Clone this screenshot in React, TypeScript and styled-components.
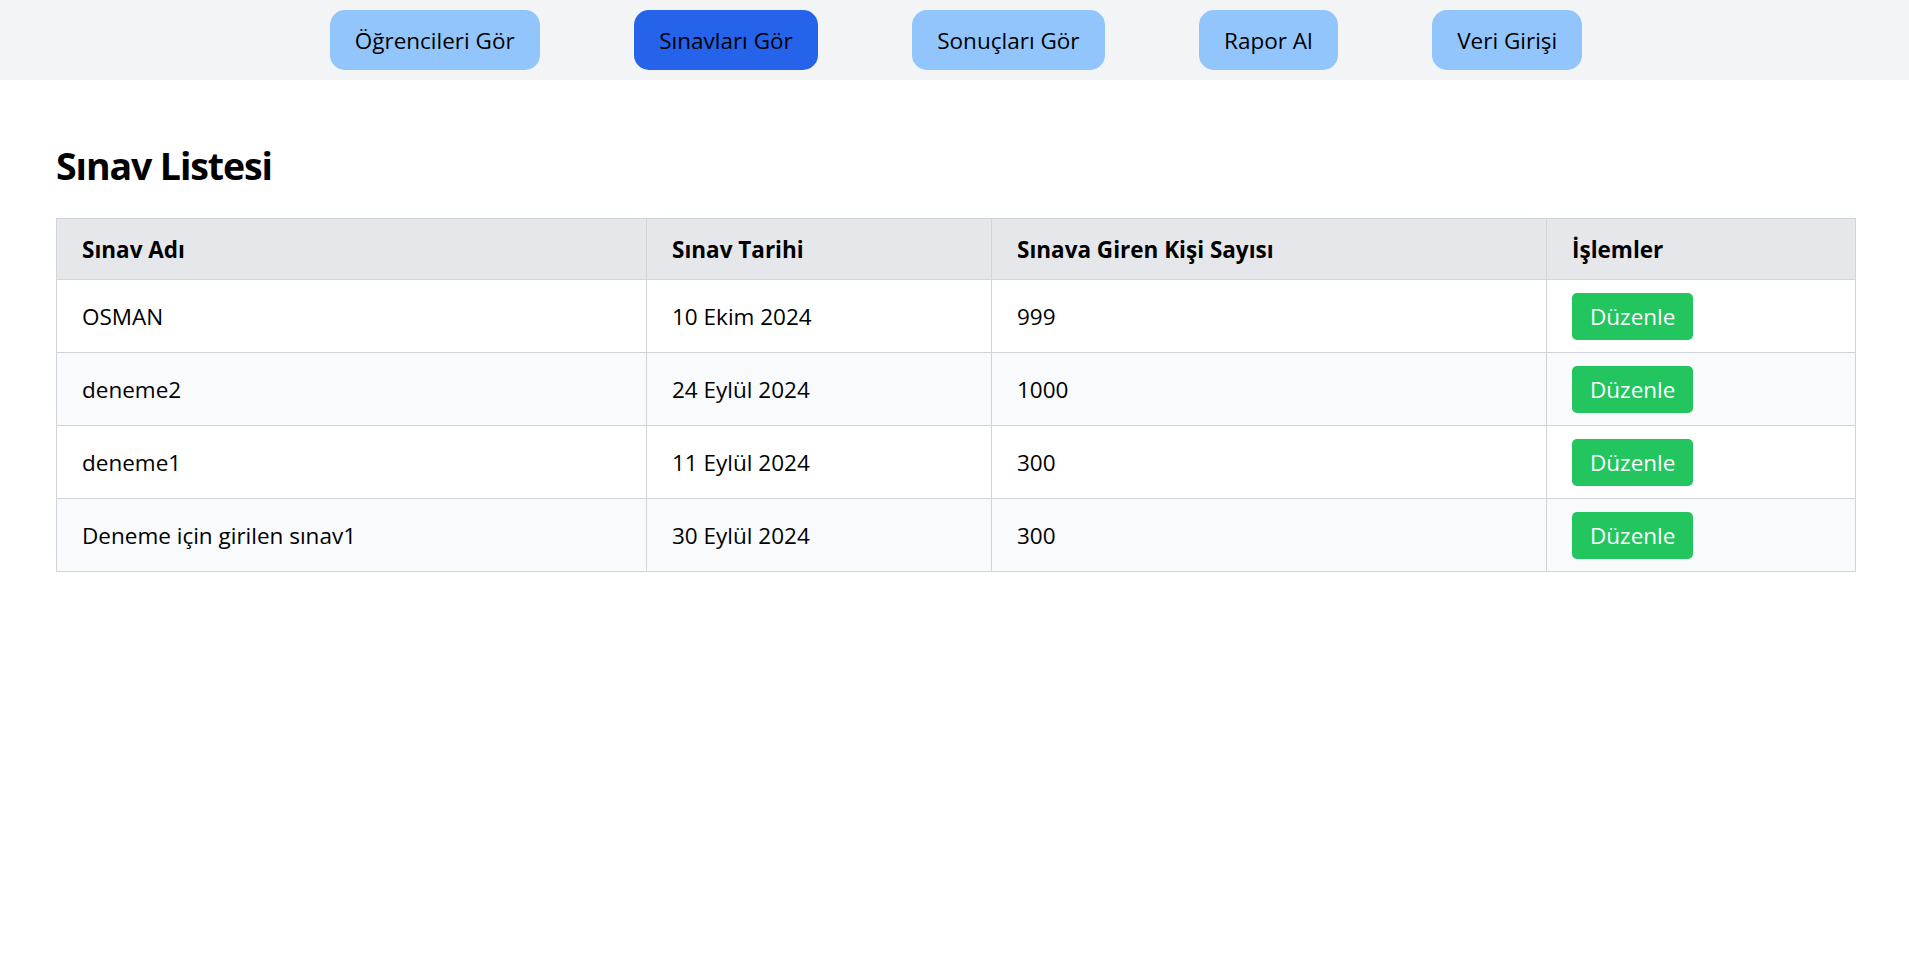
import React from "react";
import styled, { createGlobalStyle } from "styled-components";

const GlobalStyle = createGlobalStyle`
  html, body {
    margin: 0;
    padding: 0;
    background: #ffffff;
  }
  body {
    font-family: "Segoe UI", "Open Sans", "Noto Sans", sans-serif;
    color: #000000;
  }
  * { box-sizing: border-box; }
`;

const NavBar = styled.nav`
  height: 80px;
  background: #f3f4f6;
  display: flex;
  justify-content: center;
  align-items: center;
  gap: 94.5px;
  padding-left: 3px;
`;

const NavButton = styled.button<{ $active?: boolean }>`
  height: 60px;
  padding: 0 25px;
  border: none;
  border-radius: 15px;
  background: ${(p) => (p.$active ? "#2563eb" : "#93c5fd")};
  color: #000000;
  font-family: inherit;
  font-size: 22.5px;
  line-height: 35px;
  cursor: pointer;
`;

const Main = styled.main`
  padding: 63px 54px 0 56px;
`;

const Title = styled.h2`
  margin: 0 0 30px;
  font-size: 37.5px;
  line-height: 45px;
  font-weight: 700;
  letter-spacing: -1.1px;
`;

const Table = styled.table`
  width: 100%;
  border-collapse: collapse;
  table-layout: fixed;
  font-size: 22.5px;
  line-height: 35px;
`;

const HeadCell = styled.th`
  background: #e5e7eb;
  border: 1px solid #d1d5db;
  padding: 12.5px 25px;
  text-align: left;
  font-weight: 700;
  height: 61px;
`;

const Row = styled.tr<{ $striped?: boolean }>`
  background: ${(p) => (p.$striped ? "#f9fafb" : "#ffffff")};
`;

const Cell = styled.td`
  border: 1px solid #d1d5db;
  padding: 12.5px 25px;
  height: 73px;
  vertical-align: middle;
`;

const EditButton = styled.button`
  display: inline-flex;
  align-items: center;
  justify-content: center;
  height: 47px;
  padding: 0 18px;
  border: none;
  border-radius: 5px;
  background: #22c55e;
  color: #ffffff;
  font-family: inherit;
  font-size: 22.5px;
  line-height: 35px;
  cursor: pointer;
`;

const navItems = [
  { label: "Öğrencileri Gör", active: false },
  { label: "Sınavları Gör", active: true },
  { label: "Sonuçları Gör", active: false },
  { label: "Rapor Al", active: false },
  { label: "Veri Girişi", active: false },
];

const exams = [
  { name: "OSMAN", date: "10 Ekim 2024", count: "999" },
  { name: "deneme2", date: "24 Eylül 2024", count: "1000" },
  { name: "deneme1", date: "11 Eylül 2024", count: "300" },
  { name: "Deneme için girilen sınav1", date: "30 Eylül 2024", count: "300" },
];

export default function App() {
  return (
    <>
      <GlobalStyle />
      <NavBar>
        {navItems.map((n) => (
          <NavButton key={n.label} $active={n.active}>
            {n.label}
          </NavButton>
        ))}
      </NavBar>
      <Main>
        <Title>Sınav Listesi</Title>
        <Table>
          <colgroup>
            <col style={{ width: "590px" }} />
            <col style={{ width: "345px" }} />
            <col style={{ width: "555px" }} />
            <col style={{ width: "309px" }} />
          </colgroup>
          <thead>
            <tr>
              <HeadCell>Sınav Adı</HeadCell>
              <HeadCell>Sınav Tarihi</HeadCell>
              <HeadCell>Sınava Giren Kişi Sayısı</HeadCell>
              <HeadCell>İşlemler</HeadCell>
            </tr>
          </thead>
          <tbody>
            {exams.map((e, i) => (
              <Row key={e.name} $striped={i % 2 === 1}>
                <Cell>{e.name}</Cell>
                <Cell>{e.date}</Cell>
                <Cell>{e.count}</Cell>
                <Cell>
                  <EditButton>Düzenle</EditButton>
                </Cell>
              </Row>
            ))}
          </tbody>
        </Table>
      </Main>
    </>
  );
}
